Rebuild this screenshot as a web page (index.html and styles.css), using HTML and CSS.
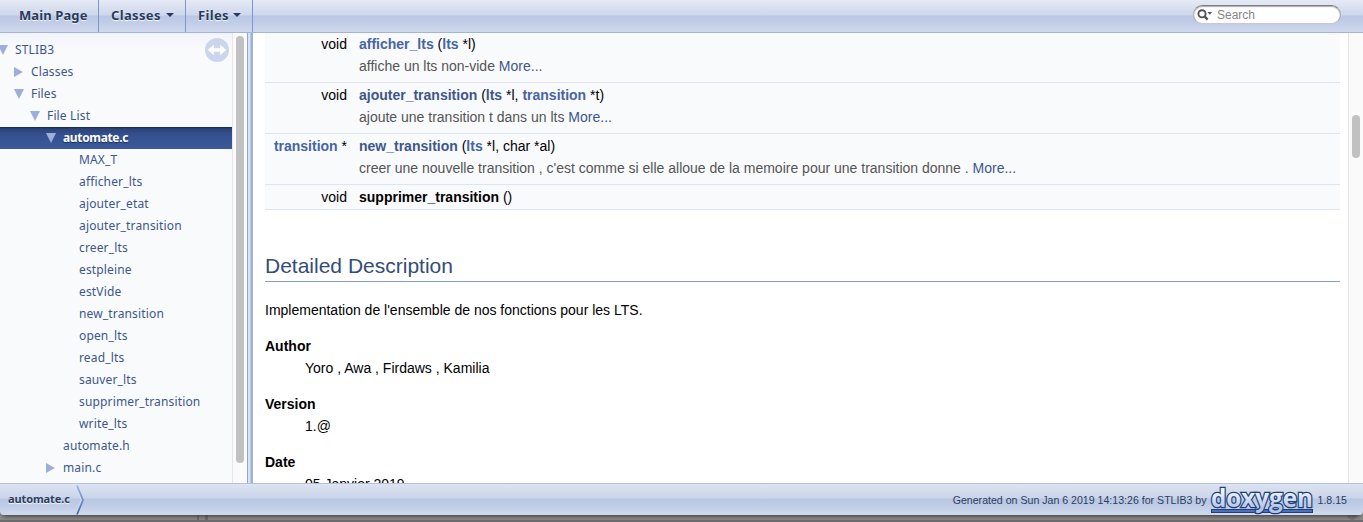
FILE: index.html
```
<!DOCTYPE html>
<html lang="fr">
<head>
<meta charset="utf-8">
<title>STLIB3: automate.c File Reference</title>
<link rel="stylesheet" href="styles.css">
</head>
<body>
<div class="window">
  <header class="nav">
    <a class="tab tab-main"><span>Main Page</span></a>
    <a class="tab tab-classes"><span>Classes</span><i class="caret"></i></a>
    <a class="tab tab-files"><span>Files</span><i class="caret"></i></a>
    <div class="search">
      <svg width="16" height="12" viewBox="0 0 16 12"><circle cx="5" cy="4.8" r="3.6" fill="none" stroke="#555" stroke-width="1.9"/><path d="M7.6 7.4L10.6 10.6" stroke="#555" stroke-width="2.3"/><path d="M10.5 3h4.6l-2.3 2.8z" fill="#555"/></svg>
      <span>Search</span>
    </div>
  </header>
  <div class="body">
    <nav class="tree">
      <svg class="sync" width="24" height="24" viewBox="0 0 24 24"><circle cx="12" cy="12" r="12" fill="#cbd6ec"/><path d="M2.8 12l6-5.2v3.5h6.4V6.8l6 5.2-6 5.2v-3.5H8.800v3.500z" fill="#fff"/></svg>
      <div class="row l0"><i class="down"></i><span>STLIB3</span></div>
      <div class="row l1"><i class="right"></i><span>Classes</span></div>
      <div class="row l1"><i class="down"></i><span>Files</span></div>
      <div class="row l2"><i class="down"></i><span>File List</span></div>
      <div class="row l3 selected"><i class="down"></i><span>automate.c</span></div>
      <div class="row l4"><span>MAX_T</span></div>
      <div class="row l4"><span>afficher_lts</span></div>
      <div class="row l4"><span>ajouter_etat</span></div>
      <div class="row l4"><span>ajouter_transition</span></div>
      <div class="row l4"><span>creer_lts</span></div>
      <div class="row l4"><span>estpleine</span></div>
      <div class="row l4"><span>estVide</span></div>
      <div class="row l4"><span>new_transition</span></div>
      <div class="row l4"><span>open_lts</span></div>
      <div class="row l4"><span>read_lts</span></div>
      <div class="row l4"><span>sauver_lts</span></div>
      <div class="row l4"><span>supprimer_transition</span></div>
      <div class="row l4"><span>write_lts</span></div>
      <div class="row l3 leaf"><span>automate.h</span></div>
      <div class="row l3"><i class="right"></i><span>main.c</span></div>
    </nav>
    <div class="track tree-track"><div class="thumb"></div></div>
    <div class="splitter"></div>
    <main class="doc">
      <div class="members">
        <div class="member"><div class="type">void</div><div class="sig"><b>afficher_lts</b> (<b>lts</b> *l)</div><div class="brief">affiche un lts non-vide <a>More...</a></div></div>
        <div class="member"><div class="type">void</div><div class="sig"><b class="visited">ajouter_transition</b> (<b class="visited">lts</b> *l, <b>transition</b> *t)</div><div class="brief">ajoute une transition t dans un lts <a>More...</a></div></div>
        <div class="member"><div class="type"><b>transition</b> *</div><div class="sig"><b class="visited">new_transition</b> (<b>lts</b> *l, char *al)</div><div class="brief">creer une nouvelle transition , c'est comme si elle alloue de la memoire pour une transition donne . <a>More...</a></div></div>
        <div class="member last"><div class="type">void</div><div class="sig"><b class="plain">supprimer_transition</b> ()</div></div>
      </div>
      <h2>Detailed Description</h2>
      <p>Implementation de l'ensemble de nos fonctions pour les LTS.</p>
      <dl>
        <dt>Author</dt><dd>Yoro , Awa , Firdaws , Kamilia</dd>
        <dt>Version</dt><dd>1.@</dd>
        <dt>Date</dt><dd>05 Janvier 2019</dd>
      </dl>
    </main>
    <div class="track doc-track"><div class="thumb"></div></div>
  </div>
  <footer class="foot">
    <span class="crumb">automate.c</span>
    <svg class="chevron" width="10" height="30" viewBox="0 0 10 30"><defs><linearGradient id="chev" x1="0" y1="0" x2="0" y2="1"><stop offset="0" stop-color="#9fb1dc"/><stop offset="1" stop-color="#4665a8"/></linearGradient></defs><path d="M1 .5L6.500 15L1 29.500" fill="none" stroke="#d5deef" stroke-width="1" transform="translate(-1.300 0)"/><path d="M1 .5L7 15L1 29.500" fill="none" stroke="url(#chev)" stroke-width="1.700"/></svg>
    <span class="generated">Generated on Sun Jan 6 2019 14:13:26 for STLIB3 by</span>
    <svg class="logo" width="104" height="31" viewBox="0 0 104 31">
      <defs><linearGradient id="ink" x1="0" y1="0" x2="0" y2="1"><stop offset=".25" stop-color="#fff"/><stop offset=".8" stop-color="#b3c5e9"/></linearGradient></defs>
      <rect x="1.500" y="25.500" width="101" height="3" fill="#4b70b5" stroke="#203e78"/>
      <text x="1" y="23" textLength="102" lengthAdjust="spacingAndGlyphs">doxygen</text>
    </svg>
    <span class="version">1.8.15</span>
  </footer>
</div>
<div class="behind"><i></i><b></b></div>
</body>
</html>
```
FILE: styles.css
```
* { box-sizing: border-box; }
body { margin: 0; width: 1363px; height: 522px; overflow: hidden; background: #8a8a8a; font: 14px/22px "Liberation Sans", Arial, sans-serif; color: #000; }
.window { height: 515px; display: flex; flex-direction: column; position: relative; }
.nav { height: 33px; flex: none; display: flex; border-bottom: 1px solid #a3b4d7; background: linear-gradient(#e5eaf5 0, #ced7eb 15px, #bac7e4 16px, #c3cee8 24px, #d0d9ed 32px); }
.tab { display: flex; align-items: center; justify-content: space-between; border-right: 1px solid #7d94cf; font: bold 13px/30px "Noto Sans", sans-serif; color: #283a5d; text-shadow: 0 1px 1px rgba(255,255,255,.9); letter-spacing: .1px; white-space: nowrap; }
.tab span { height: 32px; }
.tab-main { width: 99px; padding-left: 19px; }
.tab-classes { width: 87px; padding: 0 11px 0 12px; }
.tab-files { width: 67px; padding: 0 11px 0 12px; }
.tab-classes span, .tab-files span { letter-spacing: .35px; }
.caret { border: 4px solid transparent; border-top-color: #283a5d; border-bottom: 0; margin-bottom: 2px; }
.search { margin: 5px 22px 0 auto; width: 148px; height: 19px; border-radius: 10px; background: #fff; border: 1px solid #aaa; border-top-color: #808080; border-bottom-color: #c9c9c9; box-shadow: inset 0 1px 1px #aaa; display: flex; align-items: center; padding-left: 3px; gap: 4px; font-size: 12px; line-height: 17px; color: #858585; }
.search span { padding-top: 1px; }
.body { display: flex; flex: 1; min-height: 0; }
.tree { width: 232px; height: 450px; padding-top: 6px; position: relative; overflow: hidden; background: linear-gradient(#f1f4fa, #f9fafc 18px); font: 12px/22px "Noto Sans", sans-serif; color: #3d578c; letter-spacing: .15px; }
.sync { position: absolute; left: 205px; top: 5px; }
.row { height: 22px; display: flex; align-items: center; white-space: nowrap; }
.row i { width: 16px; flex: none; display: flex; }
.row i::before { content: ""; width: 9px; height: 10px; background: #9cafd9; }
.row .down::before { width: 10px; clip-path: polygon(0 0, 100% 0, 50% 100%); }
.row .right::before { clip-path: polygon(0 0, 100% 50%, 0 100%); }
.l0 i { margin-left: -2px; }
.l0 span { margin-left: 1px; }
.l1 { padding-left: 14px; }
.l2 { padding-left: 30px; }
.l3 { padding-left: 46px; }
.l4 { padding-left: 79px; }
.l1 span, .l2 span, .l3 span { margin-left: 1px; }
.leaf { padding-left: 62px; }
.selected { background: linear-gradient(#15254a 0, #2c4579 2px, #345090 8px, #3c5a9c); color: #fff; font-weight: bold; text-shadow: 0 1px 1px #1b2f57; letter-spacing: -.35px; }
.track { background: #fafafa; border-left: 1px solid #e6e6e6; flex: none; }
.thumb { background: #c1c1c1; border-radius: 4px; width: 8px; }
.tree-track { width: 14px; padding: 3px 0 0 3px; }
.tree-track .thumb { height: 427px; }
.splitter { width: 7px; flex: none; background: linear-gradient(90deg, #fff 0 1px, #90a5d6 1px 2px, #dce3f2 2px 4px, #b9c6e4 4px 5px, #9eb0dc 5px 7px); }
.doc { flex: 1; min-width: 0; padding: 0 8px 0 12px; background: #fff; overflow: hidden; }
.member { display: grid; grid-template-columns: 82px 1fr; column-gap: 12px; height: 51px; border-bottom: 1px solid #dee4f0; background: #f9fafc; align-content: start; padding-top: 1px; }
.member:first-child { height: 50px; padding-top: 0; }
.member.last { height: 25px; }
.type { text-align: right; white-space: nowrap; }
.brief { grid-column: 2; color: #555; white-space: nowrap; }
.members b { color: #4665a2; }
.members b.visited { color: #3d578c; }
.members b.plain { color: #000; }
a { color: #3d578c; }
h2 { margin: 41px 0 0; height: 31px; border-bottom: 1px solid #879ecb; color: #354c7b; font-size: 21px; line-height: 30px; font-weight: normal; }
p { margin: 17px 0 14px; }
dl { margin: 0; }
dt { font-weight: bold; }
dd { margin: 0 0 14px 40px; }
.doc-track { width: 15px; padding: 82px 0 0 3px; }
.doc-track .thumb { height: 43px; }
.foot { height: 32px; flex: none; display: flex; align-items: center; border-top: 1px solid #b3c1de; border-radius: 0 0 4px 4px; background: linear-gradient(#dce3f1 0, #cbd5ea 14px, #b8c6e3 15px, #c2cee7 23px, #d1daed 31px); box-shadow: 0 4px 4px -3px #333; font-size: 10.6px; color: #2a3d61; white-space: nowrap; }
.crumb { width: 76px; padding-left: 8px; font: bold 11px/28px "Noto Sans", sans-serif; height: 30px; text-shadow: 0 1px 1px #fff; letter-spacing: -.1px; }
.generated { margin-left: auto; }
.logo { margin: 0 4px 0 3px; overflow: visible; }
.logo text { font: bold 25px "Open Sans", sans-serif; fill: url(#ink); stroke: #203e78; stroke-width: 2.500px; paint-order: stroke; }
.version { margin-right: 16px; }
.behind { height: 7px; display: flex; border-bottom: 2px solid #6c6c6c; }
.behind i { width: 11px; margin-left: 197px; border-left: 2px solid #6c6c6c; border-right: 3px solid #6c6c6c; }
.behind b { width: 10px; height: 5px; margin-left: 1139px; background: #777; border-radius: 0 0 5px 5px; }
```
